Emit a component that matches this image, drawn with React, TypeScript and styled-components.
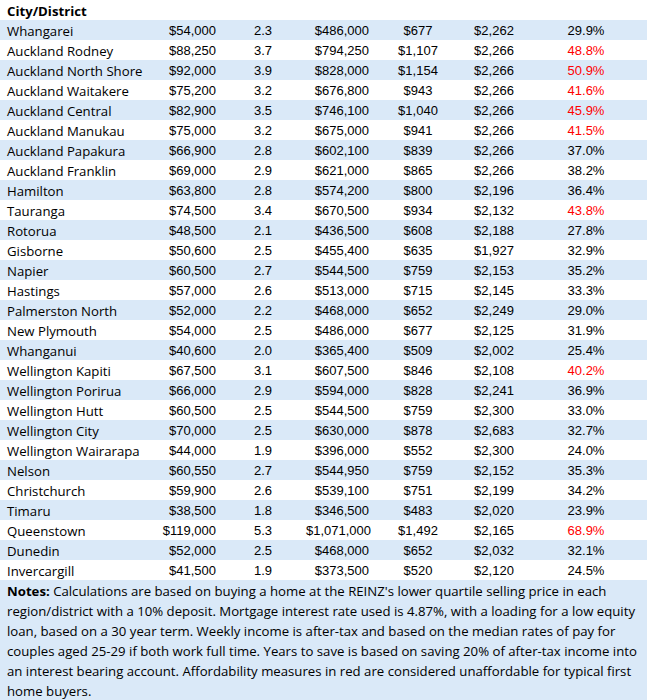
import React from "react";
import styled, { createGlobalStyle } from "styled-components";

const Global = createGlobalStyle`
  html, body { margin: 0; padding: 0; background: #ffffff; }
  body { font-family: "Open Sans", "Liberation Sans", sans-serif; color: #000; }
`;

type Row = [string, string, string, string, string, string, string];

const rows: Row[] = [
  ["Whangarei", "$54,000", "2.3", "$486,000", "$677", "$2,262", "29.9%"],
  ["Auckland Rodney", "$88,250", "3.7", "$794,250", "$1,107", "$2,266", "48.8%"],
  ["Auckland North Shore", "$92,000", "3.9", "$828,000", "$1,154", "$2,266", "50.9%"],
  ["Auckland Waitakere", "$75,200", "3.2", "$676,800", "$943", "$2,266", "41.6%"],
  ["Auckland Central", "$82,900", "3.5", "$746,100", "$1,040", "$2,266", "45.9%"],
  ["Auckland Manukau", "$75,000", "3.2", "$675,000", "$941", "$2,266", "41.5%"],
  ["Auckland Papakura", "$66,900", "2.8", "$602,100", "$839", "$2,266", "37.0%"],
  ["Auckland Franklin", "$69,000", "2.9", "$621,000", "$865", "$2,266", "38.2%"],
  ["Hamilton", "$63,800", "2.8", "$574,200", "$800", "$2,196", "36.4%"],
  ["Tauranga", "$74,500", "3.4", "$670,500", "$934", "$2,132", "43.8%"],
  ["Rotorua", "$48,500", "2.1", "$436,500", "$608", "$2,188", "27.8%"],
  ["Gisborne", "$50,600", "2.5", "$455,400", "$635", "$1,927", "32.9%"],
  ["Napier", "$60,500", "2.7", "$544,500", "$759", "$2,153", "35.2%"],
  ["Hastings", "$57,000", "2.6", "$513,000", "$715", "$2,145", "33.3%"],
  ["Palmerston North", "$52,000", "2.2", "$468,000", "$652", "$2,249", "29.0%"],
  ["New Plymouth", "$54,000", "2.5", "$486,000", "$677", "$2,125", "31.9%"],
  ["Whanganui", "$40,600", "2.0", "$365,400", "$509", "$2,002", "25.4%"],
  ["Wellington Kapiti", "$67,500", "3.1", "$607,500", "$846", "$2,108", "40.2%"],
  ["Wellington Porirua", "$66,000", "2.9", "$594,000", "$828", "$2,241", "36.9%"],
  ["Wellington Hutt", "$60,500", "2.5", "$544,500", "$759", "$2,300", "33.0%"],
  ["Wellington City", "$70,000", "2.5", "$630,000", "$878", "$2,683", "32.7%"],
  ["Wellington Wairarapa", "$44,000", "1.9", "$396,000", "$552", "$2,300", "24.0%"],
  ["Nelson", "$60,550", "2.7", "$544,950", "$759", "$2,152", "35.3%"],
  ["Christchurch", "$59,900", "2.6", "$539,100", "$751", "$2,199", "34.2%"],
  ["Timaru", "$38,500", "1.8", "$346,500", "$483", "$2,020", "23.9%"],
  ["Queenstown", "$119,000", "5.3", "$1,071,000", "$1,492", "$2,165", "68.9%"],
  ["Dunedin", "$52,000", "2.5", "$468,000", "$652", "$2,032", "32.1%"],
  ["Invercargill", "$41,500", "1.9", "$373,500", "$520", "$2,120", "24.5%"],
];

const Sheet = styled.div`
  width: 647px;
  display: flex;
  flex-direction: column;
`;

const Grid = styled.div`
  display: grid;
  grid-template-columns: 160px 60px 86px 67px 90px 62px 122px;
`;

const HeaderCell = styled.div`
  grid-column: 1 / -1;
  height: 20px;
  line-height: 22px;
  padding-left: 7px;
  font-weight: 700;
  font-size: 13.2px;
`;

const Band = styled.div<{ $shaded: boolean }>`
  display: contents;
  & > div {
    background: ${(p) => (p.$shaded ? "#dae9f8" : "#ffffff")};
  }
`;

const Cell = styled.div<{ $align: "left" | "right" | "center"; $red?: boolean; $text?: boolean }>`
  height: 20px;
  line-height: 22px;
  white-space: nowrap;
  text-align: ${(p) => p.$align};
  font-family: ${(p) => (p.$text ? '"Open Sans", sans-serif' : '"Liberation Sans", Arial, sans-serif')};
  font-size: ${(p) => (p.$text ? "13.2px" : "13px")};
  color: ${(p) => (p.$red ? "#ff0000" : "#000000")};
  padding-left: ${(p) => (p.$align === "left" ? "7px" : "0")};
  padding-right: ${(p) => (p.$align === "right" ? "4px" : "0")};
`;

const Notes = styled.div`
  background: #dae9f8;
  padding: 1px 7px 0;
  font-size: 13.2px;
  line-height: 20px;
  height: 120px;
  box-sizing: border-box;
`;

const aligns: ("left" | "right" | "center")[] = ["left", "right", "center", "right", "center", "center", "center"];

export default function App() {
  return (
    <Sheet>
      <Global />
      <Grid>
        <HeaderCell>City/District</HeaderCell>
        {rows.map((r, i) => {
          const pct = parseFloat(r[6]);
          return (
            <Band key={r[0]} $shaded={i % 2 === 0}>
              {r.map((v, j) => (
                <Cell key={j} $align={aligns[j]} $text={j === 0} $red={j === 6 && pct >= 40}>
                  {v}
                </Cell>
              ))}
            </Band>
          );
        })}
      </Grid>
      <Notes>
        <b>Notes:</b> Calculations are based on buying a home at the REINZ's lower quartile selling price in each
        region/district with a 10% deposit. Mortgage interest rate used is 4.87%, with a loading for a low equity
        loan, based on a 30 year term. Weekly income is after-tax and based on the median rates of pay for couples
        aged 25-29 if both work full time. Years to save is based on saving 20% of after-tax income into an interest
        bearing account. Affordability measures in red are considered unaffordable for typical first home buyers.
      </Notes>
    </Sheet>
  );
}
